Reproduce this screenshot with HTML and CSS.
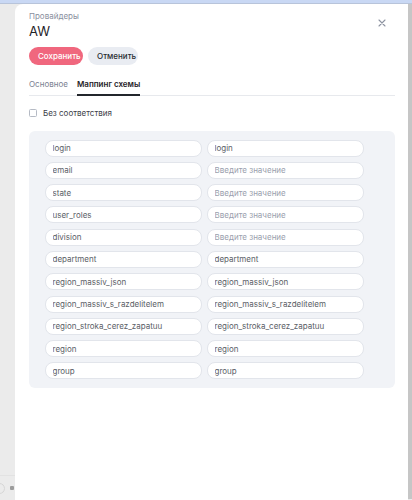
FILE: index.html
```html
<!DOCTYPE html>
<html lang="ru">
<head>
    <meta charset="UTF-8">
    <meta name="viewport" content="width=device-width, initial-scale=1.0">
    <title>Провайдеры — AW</title>
    <link rel="stylesheet" href="styles.css">
</head>
<body>

    <div class="topbar"></div>

    <div class="layout">
        <aside class="sidebar">
            <div class="sidebar__footer">
                <span class="sidebar__avatar"></span>
                <span class="sidebar__dot"></span>
            </div>
        </aside>

        <section class="drawer">
            <div class="drawer__head">
                <div>
                    <div class="drawer__crumb">Провайдеры</div>
                    <h1 class="drawer__title">AW</h1>
                </div>
                <button type="button" class="drawer__close" aria-label="Закрыть">
                    <svg width="8" height="8" viewBox="0 0 8 8">
                        <path d="M1 1L7 7M7 1L1 7" stroke="#8d93a1" stroke-width="1.1" stroke-linecap="round"/>
                    </svg>
                </button>
            </div>

            <div class="drawer__actions">
                <button type="button" class="btn btn--primary">Сохранить</button>
                <button type="button" class="btn btn--ghost">Отменить</button>
            </div>

            <nav class="tabs">
                <span class="tabs__item">Основное</span>
                <span class="tabs__item tabs__item--active">Маппинг схемы</span>
            </nav>

            <label class="check">
                <span class="check__box"></span>
                Без соответствия
            </label>

            <div class="mapping" id="mapping"></div>
        </section>

        <div class="scrollbar"></div>
    </div>

    <script>
        const rows = [
            ['login', 'login'],
            ['email', ''],
            ['state', ''],
            ['user_roles', ''],
            ['division', ''],
            ['department', 'department'],
            ['region_massiv_json', 'region_massiv_json'],
            ['region_massiv_s_razdelitelem', 'region_massiv_s_razdelitelem'],
            ['region_stroka_cerez_zapatuu', 'region_stroka_cerez_zapatuu'],
            ['region', 'region'],
            ['group', 'group']
        ];

        const mapping = document.getElementById('mapping');

        rows.forEach(function (row) {
            row.forEach(function (value) {
                const input = document.createElement('input');
                input.type = 'text';
                input.className = 'mapping__field';
                input.value = value;
                input.placeholder = 'Введите значение';
                mapping.appendChild(input);
            });
        });
    </script>
</body>
</html>
```

FILE: styles.css
```css
body {
    margin: 0;
    background-color: #ebebeb;
    font-family: Inter, "Noto Sans", sans-serif;
    color: #1f2228;
    overflow: hidden;
}

.topbar {
    height: 3px;
    background-color: #c9d8f4;
    border-bottom: 1px solid #b8c4da;
}

.layout {
    display: flex;
    height: 496px;
}

.sidebar {
    width: 15px;
    display: flex;
    flex-direction: column;
    justify-content: flex-end;
    overflow: hidden;
}

.sidebar__footer {
    display: flex;
    align-items: center;
    gap: 5px;
    height: 24px;
    margin-left: -6px;
    border-top: 1px solid #e2e2e2;
}

.sidebar__avatar {
    width: 9px;
    height: 9px;
    border: 1px solid #d6d6d6;
    border-radius: 50%;
}

.sidebar__dot {
    width: 4px;
    height: 4px;
    background-color: #9c9c9c;
    border-radius: 1px;
}

.drawer {
    flex: 1;
    background-color: #ffffff;
    border-radius: 8px 0 0 0;
    padding: 7px 13px 0 14px;
}

.drawer__head {
    display: flex;
    justify-content: space-between;
    align-items: flex-start;
}

.drawer__crumb {
    font-size: 8px;
    color: #8a90a0;
    line-height: 10px;
}

.drawer__title {
    margin: 3.5px 0 0;
    font-size: 13px;
    font-weight: 400;
    line-height: 13px;
}

.drawer__close {
    background: none;
    border: none;
    padding: 0;
    margin: 8px 9px 0 0;
    width: 8px;
    height: 8px;
    cursor: pointer;
}

.drawer__close svg {
    display: block;
}

.drawer__actions {
    display: flex;
    gap: 5px;
    margin-top: 9px;
}

.btn {
    height: 18px;
    padding: 0 9px;
    border: none;
    border-radius: 9px;
    font-family: inherit;
    font-size: 8px;
    font-weight: 500;
    cursor: pointer;
}

.btn--primary {
    width: 54px;
    background-color: #f0677e;
    color: #ffffff;
}

.btn--ghost {
    width: 50px;
    background-color: #e9ecf2;
    color: #2a2d33;
}

.tabs {
    display: flex;
    gap: 9px;
    margin-top: 11px;
    border-bottom: 1px solid #e7e9ed;
}

.tabs__item {
    font-size: 8px;
    line-height: 10px;
    padding: 3px 0 5px;
    color: #7b8191;
    border-bottom: 2px solid transparent;
    margin-bottom: -1px;
}

.tabs__item--active {
    color: #1f2228;
    font-weight: 600;
    border-bottom-color: #23262c;
}

.check {
    display: flex;
    align-items: center;
    gap: 6px;
    margin-top: 12px;
    font-size: 8px;
    color: #3c4048;
}

.check__box {
    width: 6px;
    height: 6px;
    border: 1px solid #b5bac4;
    border-radius: 1.5px;
    background-color: #ffffff;
}

.mapping {
    display: grid;
    grid-template-columns: 157px 157px;
    column-gap: 5px;
    row-gap: 5.3px;
    margin-top: 13px;
    padding: 9px 0 9px 15.5px;
    background-color: #f1f3f7;
    border-radius: 6px;
}

.mapping__field {
    box-sizing: border-box;
    height: 17px;
    width: 100%;
    padding: 0 7px;
    border: 1px solid #e2e5eb;
    border-radius: 8px;
    background-color: #ffffff;
    font-family: inherit;
    font-size: 8px;
    color: #5a5e66;
    outline: none;
}

.mapping__field::placeholder {
    color: #9aa0ad;
}

.scrollbar {
    width: 4px;
    margin-bottom: 1px;
    background-color: #c6c6c6;
}
```
